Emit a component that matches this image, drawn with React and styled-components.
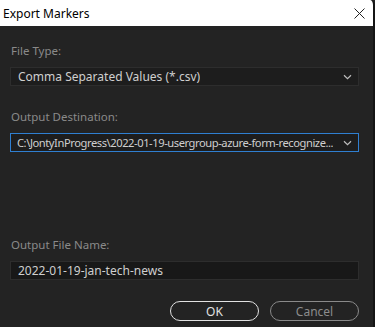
import React from 'react';
import styled, { createGlobalStyle } from 'styled-components';

const Global = createGlobalStyle`
  html, body {
    margin: 0;
    padding: 0;
    background: #232323;
  }
  * { box-sizing: border-box; }
`;

const Window = styled.div`
  width: 375px;
  height: 327px;
  display: flex;
  flex-direction: column;
  background: #232323;
  border-right: 2px solid #151515;
  border-top-right-radius: 5px;
  font-family: 'Noto Sans', 'Open Sans', sans-serif;
  overflow: hidden;
`;

const TitleBar = styled.div`
  height: 26px;
  flex: none;
  display: flex;
  align-items: center;
  justify-content: space-between;
  background: #fff;
  padding: 0 8px 0 3px;
  font-size: 12px;
  color: #000;
`;

const Body = styled.div`
  flex: 1;
  display: flex;
  flex-direction: column;
  padding: 17px 14px 0 10px;
`;

const Label = styled.div`
  height: 16px;
  line-height: 16px;
  font-size: 11.5px;
  color: #8a8a8a;
  padding-left: 1px;
  margin-top: ${p => p.$top || 0}px;
  margin-bottom: 8px;
`;

const Field = styled.div`
  height: 19px;
  display: flex;
  align-items: center;
  justify-content: space-between;
  background: ${p => (p.$input ? '#181818' : '#1d1d1d')};
  border: 1px solid ${p => (p.$active ? '#2f7fd1' : '#2d2d2d')};
  padding: 0 6px 0 ${p => (p.$active ? 6 : 7)}px;
  font-size: 12px;
  color: #cfcfcf;
  white-space: nowrap;
`;

const FieldText = styled.span`
  overflow: hidden;
  text-overflow: ellipsis;
  font-size: ${p => p.$tight ? '11.2px' : 'inherit'};
  letter-spacing: ${p => p.$tight ? '-0.45px' : 'normal'};
`;

const Buttons = styled.div`
  display: flex;
  justify-content: flex-end;
  gap: 11px;
  margin-top: 21px;
`;

const Button = styled.div`
  width: 89px;
  height: 20px;
  border-radius: 10px;
  border: 1.5px solid ${p => (p.$primary ? '#e2e2e2' : '#8a8a8a')};
  color: ${p => (p.$primary ? '#e2e2e2' : '#8c8c8c')};
  font-size: 12px;
  display: flex;
  align-items: center;
  justify-content: center;
`;

const Chevron = () => (
  <svg width="9" height="6" viewBox="0 0 9 6" style={{ flex: 'none', marginLeft: 6 }}>
    <path d="M1 1.2 L4.5 4.6 L8 1.2" fill="none" stroke="#bdbdbd" strokeWidth="1.2" />
  </svg>
);

const Close = () => (
  <svg width="11" height="11" viewBox="0 0 11 11">
    <path d="M0.5 0.5 L10.5 10.5 M10.5 0.5 L0.5 10.5" stroke="#222" strokeWidth="1" />
  </svg>
);

export default function App() {
  return (
    <>
      <Global />
      <Window>
        <TitleBar>
          <span>Export Markers</span>
          <Close />
        </TitleBar>
        <Body>
          <Label>File Type:</Label>
          <Field>
            <FieldText>Comma Separated Values (*.csv)</FieldText>
            <Chevron />
          </Field>
          <Label $top={23}>Output Destination:</Label>
          <Field $active>
            <FieldText $tight>C:\JontyInProgress\2022-01-19-usergroup-azure-form-recognize...</FieldText>
            <Chevron />
          </Field>
          <Label $top={85}>Output File Name:</Label>
          <Field $input>
            <FieldText>2022-01-19-jan-tech-news</FieldText>
          </Field>
          <Buttons>
            <Button $primary>OK</Button>
            <Button>Cancel</Button>
          </Buttons>
        </Body>
      </Window>
    </>
  );
}
